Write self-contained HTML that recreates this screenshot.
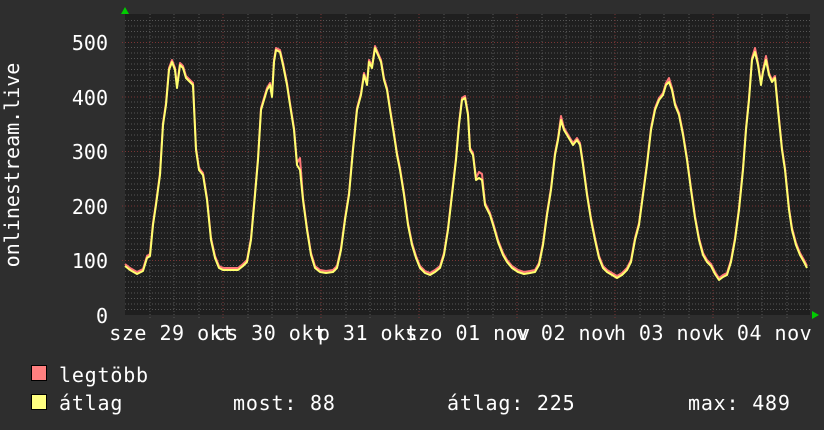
<!DOCTYPE html>
<html><head><meta charset="utf-8"><style>
html,body{margin:0;padding:0;background:#2e2e2e;}
svg{display:block;font-family:"DejaVu Sans Mono","Liberation Mono",monospace;}
</style></head><body>
<svg width="824" height="430" viewBox="0 0 824 430" xmlns="http://www.w3.org/2000/svg">
<rect width="824" height="430" fill="#2e2e2e"/>
<rect x="125" y="14" width="685" height="301" fill="#1f1f1f"/>
<g id="grid">
<g stroke="#555" stroke-width="1" stroke-dasharray="1,2">
<line x1="125" x2="810" y1="309.5" y2="309.5"/><line x1="125" x2="810" y1="304" y2="304"/><line x1="125" x2="810" y1="298.5" y2="298.5"/><line x1="125" x2="810" y1="293" y2="293"/><line x1="125" x2="810" y1="287.5" y2="287.5"/><line x1="125" x2="810" y1="282" y2="282"/><line x1="125" x2="810" y1="276.5" y2="276.5"/><line x1="125" x2="810" y1="271" y2="271"/><line x1="125" x2="810" y1="265.5" y2="265.5"/>
<line x1="125" x2="810" y1="255" y2="255"/><line x1="125" x2="810" y1="249.5" y2="249.5"/><line x1="125" x2="810" y1="244" y2="244"/><line x1="125" x2="810" y1="238.5" y2="238.5"/><line x1="125" x2="810" y1="233" y2="233"/><line x1="125" x2="810" y1="227.5" y2="227.5"/><line x1="125" x2="810" y1="222" y2="222"/><line x1="125" x2="810" y1="216.5" y2="216.5"/><line x1="125" x2="810" y1="211" y2="211"/>
<line x1="125" x2="810" y1="200.5" y2="200.5"/><line x1="125" x2="810" y1="195" y2="195"/><line x1="125" x2="810" y1="189.5" y2="189.5"/><line x1="125" x2="810" y1="184" y2="184"/><line x1="125" x2="810" y1="178.5" y2="178.5"/><line x1="125" x2="810" y1="173" y2="173"/><line x1="125" x2="810" y1="167.5" y2="167.5"/><line x1="125" x2="810" y1="162" y2="162"/><line x1="125" x2="810" y1="156.5" y2="156.5"/>
<line x1="125" x2="810" y1="146" y2="146"/><line x1="125" x2="810" y1="140.5" y2="140.5"/><line x1="125" x2="810" y1="135" y2="135"/><line x1="125" x2="810" y1="129.5" y2="129.5"/><line x1="125" x2="810" y1="124" y2="124"/><line x1="125" x2="810" y1="118.5" y2="118.5"/><line x1="125" x2="810" y1="113" y2="113"/><line x1="125" x2="810" y1="107.5" y2="107.5"/><line x1="125" x2="810" y1="102" y2="102"/>
<line x1="125" x2="810" y1="91.5" y2="91.5"/><line x1="125" x2="810" y1="86" y2="86"/><line x1="125" x2="810" y1="80.5" y2="80.5"/><line x1="125" x2="810" y1="75" y2="75"/><line x1="125" x2="810" y1="69.5" y2="69.5"/><line x1="125" x2="810" y1="64" y2="64"/><line x1="125" x2="810" y1="58.5" y2="58.5"/><line x1="125" x2="810" y1="53" y2="53"/><line x1="125" x2="810" y1="47.5" y2="47.5"/>
<line x1="125" x2="810" y1="37" y2="37"/><line x1="125" x2="810" y1="31.5" y2="31.5"/><line x1="125" x2="810" y1="26" y2="26"/><line x1="125" x2="810" y1="20.5" y2="20.5"/>
</g>
<g stroke="#555" stroke-width="1" stroke-dasharray="1,2">
<line y1="14" y2="318" x1="150" x2="150"/><line y1="14" y2="318" x1="174" x2="174"/><line y1="14" y2="318" x1="199" x2="199"/>
<line y1="14" y2="318" x1="248" x2="248"/><line y1="14" y2="318" x1="272" x2="272"/><line y1="14" y2="318" x1="297" x2="297"/>
<line y1="14" y2="318" x1="346" x2="346"/><line y1="14" y2="318" x1="370" x2="370"/><line y1="14" y2="318" x1="395" x2="395"/>
<line y1="14" y2="318" x1="444" x2="444"/><line y1="14" y2="318" x1="468" x2="468"/><line y1="14" y2="318" x1="493" x2="493"/>
<line y1="14" y2="318" x1="542" x2="542"/><line y1="14" y2="318" x1="566" x2="566"/><line y1="14" y2="318" x1="591" x2="591"/>
<line y1="14" y2="318" x1="640" x2="640"/><line y1="14" y2="318" x1="664" x2="664"/><line y1="14" y2="318" x1="689" x2="689"/>
<line y1="14" y2="318" x1="738" x2="738"/><line y1="14" y2="318" x1="762" x2="762"/><line y1="14" y2="318" x1="787" x2="787"/>
</g>
<g stroke="#7a3434" stroke-width="1" stroke-dasharray="1,2">
<line x1="122" x2="810" y1="260.5" y2="260.5"/><line x1="122" x2="810" y1="206" y2="206"/><line x1="122" x2="810" y1="151.5" y2="151.5"/><line x1="122" x2="810" y1="97" y2="97"/><line x1="122" x2="810" y1="42.5" y2="42.5"/>
<line y1="14" y2="318" x1="223" x2="223"/><line y1="14" y2="318" x1="321" x2="321"/><line y1="14" y2="318" x1="419" x2="419"/><line y1="14" y2="318" x1="517" x2="517"/><line y1="14" y2="318" x1="615" x2="615"/><line y1="14" y2="318" x1="713" x2="713"/>
</g>
</g>
<polygon points="121,14 125,7 129,14" fill="#00cc00"/>
<polygon points="812,311 819,315 812,319" fill="#00cc00"/>
<g fill="none" stroke-width="2" stroke-linejoin="round">
<polyline stroke="#ff7878" transform="translate(0,-2)" points="125,266 130,270 137,274 143,271 147,258 150,256 153,225 156,205 160,175 163,125 166,105 169,70 172,62 175,70 177,88 180,65 183,68 186,78 190,82 193,85 196,150 199,170 203,175 207,200 211,240 215,258 219,268 223,270 230,270 238,270 243,266 247,262 251,240 255,195 258,160 261,110 264,100 267,90 270,85 272,97 274,62 276,50 280,52 283,65 287,85 290,105 294,130 297,165 300,160 303,200 307,230 311,255 315,268 320,272 326,273 333,272 337,268 341,250 345,220 349,195 353,150 357,110 361,95 364,75 367,85 369,62 372,68 375,48 378,55 381,62 384,80 387,90 390,110 394,135 397,155 400,170 404,195 408,225 412,245 416,258 420,268 425,273 430,275 435,272 440,268 444,255 448,230 452,195 456,160 459,125 462,100 465,98 468,115 470,150 473,155 476,180 479,174 482,176 485,205 490,215 494,228 498,242 503,255 507,262 512,268 518,272 524,274 530,273 535,272 539,265 543,245 547,215 551,190 555,155 558,140 561,118 564,130 567,135 570,140 573,145 577,140 580,145 583,165 587,195 591,220 595,240 599,258 603,268 607,272 612,275 617,278 622,275 627,270 631,262 635,240 639,225 643,195 647,165 651,130 655,110 659,100 663,95 666,85 669,80 672,90 675,105 679,115 683,135 687,160 691,190 695,218 699,240 703,255 707,262 711,266 715,274 719,280 723,277 727,275 731,262 735,240 739,210 743,170 746,130 749,100 752,60 755,50 758,65 761,85 763,72 766,58 769,75 772,82 775,78 778,110 782,150 785,170 789,210 792,230 796,245 800,255 804,262 807,268"/>
<polyline stroke="#ffff70" points="125,266 130,270 137,274 143,271 147,258 150,256 153,225 156,205 160,175 163,125 166,105 169,70 172,62 175,70 177,88 180,65 183,68 186,78 190,82 193,85 196,150 199,170 203,175 207,200 211,240 215,258 219,268 223,270 230,270 238,270 243,266 247,262 251,240 255,195 258,160 261,110 264,100 267,90 270,85 272,97 274,62 276,50 280,52 283,65 287,85 290,105 294,130 297,165 300,170 303,200 307,230 311,255 315,268 320,272 326,273 333,272 337,268 341,250 345,220 349,195 353,150 357,110 361,95 364,75 367,85 369,62 372,68 375,48 378,55 381,62 384,80 387,90 390,110 394,135 397,155 400,170 404,195 408,225 412,245 416,258 420,268 425,273 430,275 435,272 440,268 444,255 448,230 452,195 456,160 459,125 462,100 465,98 468,115 470,150 473,155 476,180 479,178 482,180 485,205 490,215 494,228 498,242 503,255 507,262 512,268 518,272 524,274 530,273 535,272 539,265 543,245 547,215 551,190 555,155 558,140 561,120 564,130 567,135 570,140 573,145 577,140 580,145 583,165 587,195 591,220 595,240 599,258 603,268 607,272 612,275 617,278 622,275 627,270 631,262 635,240 639,225 643,195 647,165 651,130 655,110 659,100 663,95 666,85 669,82 672,90 675,105 679,115 683,135 687,160 691,190 695,218 699,240 703,255 707,262 711,266 715,274 719,280 723,277 727,275 731,262 735,240 739,210 743,170 746,130 749,100 752,60 755,52 758,65 761,85 763,72 766,60 769,75 772,82 775,78 778,110 782,150 785,170 789,210 792,230 796,245 800,255 804,262 807,268"/>
</g>
<g fill="#ffffff" font-size="20" text-anchor="end">
<text x="108" y="50">500</text>
<text x="108" y="105">400</text>
<text x="108" y="159">300</text>
<text x="108" y="214">200</text>
<text x="108" y="268">100</text>
<text x="108" y="323">0</text>
</g>
<text transform="translate(19,165) rotate(-90)" fill="#ffffff" font-size="20" text-anchor="middle">onlinestream.live</text>
<g fill="#ffffff" font-size="20" text-anchor="middle" letter-spacing="0.5">
<text x="172" y="340">sze 29 okt</text>
<text x="270" y="340">cs 30 okt</text>
<text x="368" y="340">p 31 okt</text>
<text x="468" y="340">szo 01 nov</text>
<text x="566" y="340">v 02 nov</text>
<text x="664" y="340">h 03 nov</text>
<text x="762" y="340">k 04 nov</text>
</g>
<rect x="31.5" y="365.5" width="15" height="15" fill="#ff7f7f" stroke="#000" stroke-width="1"/>
<rect x="31.5" y="394.5" width="15" height="15" fill="#ffff80" stroke="#000" stroke-width="1"/>
<g fill="#ffffff" font-size="20" letter-spacing="0.8">
<text x="59" y="382">legtöbb</text>
<text x="59" y="410">átlag</text>
<text x="233" y="410">most: 88</text>
<text x="447" y="410">átlag: 225</text>
<text x="688" y="410">max: 489</text>
</g>
</svg>
</body></html>
